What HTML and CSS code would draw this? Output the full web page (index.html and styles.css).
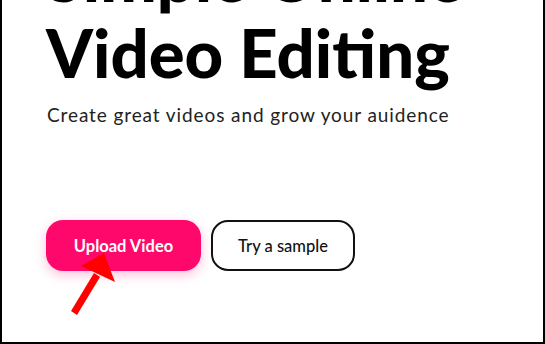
FILE: index.html
```html
<!DOCTYPE html>
<html>
<head>
<meta charset="utf-8">
<link rel="stylesheet" href="styles.css">
</head>
<body>
<div class="frame">
  <div class="hero">
    <h1 class="title">Simple Online<br>Video Editing</h1>
    <p class="subtitle">Create great videos and grow your auidence</p>
    <div class="actions">
      <button class="btn btn-primary">Upload Video</button>
      <button class="btn btn-outline">Try a sample</button>
    </div>
  </div>
  <svg class="arrow" width="60" height="80" viewBox="0 0 60 80">
    <polygon points="9,65 32,27 38,31 15,69" fill="#f00"/>
    <polygon points="42,7 19,20 53,36" fill="#f00"/>
  </svg>
</div>
</body>
</html>
```
FILE: styles.css
```css
html, body {
  margin: 0;
  padding: 0;
  background: #fff;
}
.frame {
  position: relative;
  width: 545px;
  height: 344px;
  box-sizing: border-box;
  border: 2px solid #000;
  border-top: none;
  overflow: hidden;
  background: #fff;
}
.hero {
  padding-left: 44px;
}
.title {
  margin: -62px 0 0 0;
  font-family: "Lato", sans-serif;
  font-weight: 900;
  font-size: 67px;
  line-height: 76px;
  color: #000;
}
.subtitle {
  margin: 13px 0 0 1px;
  font-family: "Lato", sans-serif;
  font-weight: 400;
  font-size: 19px;
  letter-spacing: 0.9px;
  color: #222;
}
.actions {
  display: flex;
  gap: 10px;
  margin-top: 94px;
}
.btn {
  height: 51px;
  border-radius: 17px;
  font-family: "Lato", sans-serif;
  font-size: 16.5px;
  box-sizing: border-box;
  cursor: pointer;
}
.btn-primary {
  width: 155px;
  background: #ff086c;
  color: #fff;
  border: none;
  font-weight: 700;
  box-shadow: 0 4px 12px rgba(255, 8, 108, 0.25);
}
.btn-outline {
  width: 144px;
  background: #fff;
  color: #111;
  border: 2px solid #111;
  font-weight: 500;
}
.arrow {
  position: absolute;
  left: 60px;
  top: 246px;
}
```
